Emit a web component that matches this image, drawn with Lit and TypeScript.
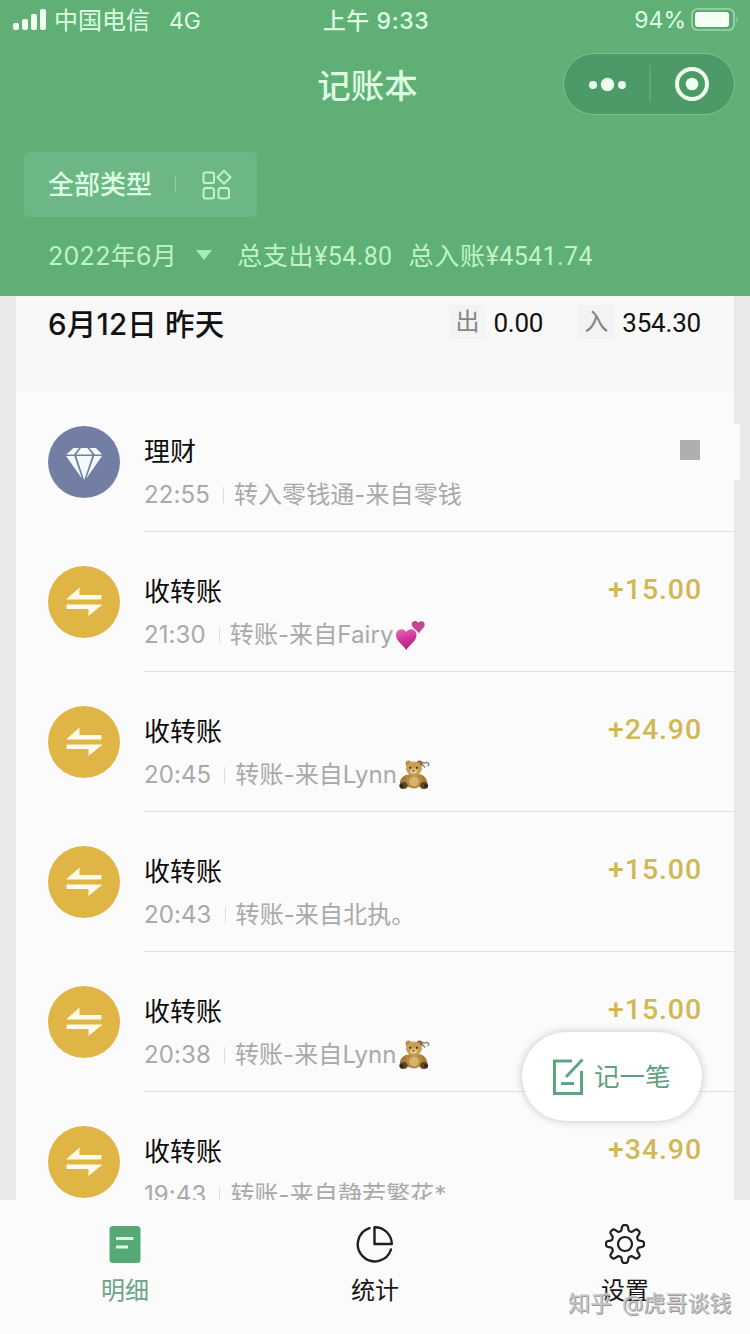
import { LitElement, html, css, svg, nothing } from "lit";
import { customElement, property } from "lit/decorators.js";

interface Entry {
  kind: "invest" | "transfer";
  title: string;
  time: string;
  note: string;
  emoji?: "hearts" | "bear";
  amount?: string;
}

const ENTRIES: Entry[] = [
  { kind: "invest", title: "理财", time: "22:55", note: "转入零钱通-来自零钱" },
  { kind: "transfer", title: "收转账", time: "21:30", note: "转账-来自Fairy", emoji: "hearts", amount: "15.00" },
  { kind: "transfer", title: "收转账", time: "20:45", note: "转账-来自Lynn", emoji: "bear", amount: "24.90" },
  { kind: "transfer", title: "收转账", time: "20:43", note: "转账-来自北执。", amount: "15.00" },
  { kind: "transfer", title: "收转账", time: "20:38", note: "转账-来自Lynn", emoji: "bear", amount: "15.00" },
  { kind: "transfer", title: "收转账", time: "19:43", note: "转账-来自静若繁花*", amount: "34.90" },
];

const diamond = svg`
  <circle cx="36" cy="36" r="36" fill="#727ea3"></circle>
  <g fill="#f3fbfa">
    <path d="M25.500 22H31L26 28.500H18.300Z"></path>
    <path d="M33 22H39.500L44.500 28.500H28.200Z"></path>
    <path d="M41.500 22H48L54 28.500H46.800Z"></path>
    <path d="M18 30H26.300L34 52.500Z"></path>
    <path d="M28.300 30H44.200L36.200 54Z"></path>
    <path d="M46.200 30H54L38.300 52.500Z"></path>
  </g>`;

const arrows = svg`
  <circle cx="36" cy="36" r="36" fill="#dfb545"></circle>
  <path fill="#fffbea" d="M18 33.500L31.500 21.500V29H53.500V33.500ZM18.500 38.500H54.500L40.500 50V43H18.500Z"></path>`;

const hearts = html`<svg class="emoji" viewBox="0 0 32 32">
  <defs>
    <linearGradient id="hg" x1="0" y1="0" x2="0.3" y2="1">
      <stop offset="0" stop-color="#e86db5"></stop><stop offset="0.55" stop-color="#d33599"></stop><stop offset="1" stop-color="#b3267f"></stop>
    </linearGradient>
  </defs>
  <path fill="url(#hg)" d="M11.200 31C8.500 26 1 22.500 1 16C1 9.500 9 8.500 11.200 13C13.500 8.500 21.500 9.500 21.500 16C21.500 22.500 14 26 11.200 31Z"></path>
  <path fill="#c0468f" d="M24 14.500C22 11 16.700 9 16.700 5.300C16.700 1.500 21.800 1 23.300 4C25 1 30 2 29.700 5.500C29.500 9 25.500 11 24 14.500Z"></path>
</svg>`;

const bear = html`<svg class="emoji" viewBox="0 0 32 32">
  <path d="M22 4.500C25 2 26 5 28 3.500C31 3 31.500 6 29.500 7M24 5L27 8.500" fill="none" stroke="#7c8070" stroke-width="1.300"></path>
  <circle cx="10.500" cy="4.500" r="3" fill="#b8924c"></circle><circle cx="21.500" cy="4.500" r="3" fill="#8a6b38"></circle>
  <path d="M8 16C3 18 1 22 2.500 26L9 28H23L29 26C30 21 27 17 23 15.500Z" fill="#a67d38"></path>
  <ellipse cx="16" cy="21.500" rx="8" ry="8" fill="#b68c43"></ellipse>
  <ellipse cx="16" cy="22.500" rx="5" ry="5" fill="#d5b36b"></ellipse>
  <ellipse cx="16" cy="9.500" rx="8" ry="7" fill="#c6a057"></ellipse>
  <ellipse cx="15.500" cy="12" rx="3.500" ry="2.600" fill="#e2c988"></ellipse>
  <circle cx="12.300" cy="8.800" r="1" fill="#33240f"></circle><circle cx="18.800" cy="8.800" r="1" fill="#33240f"></circle>
  <path d="M14.200 11H16.800L15.500 12.600Z" fill="#33240f"></path>
  <ellipse cx="5.500" cy="26.500" rx="4" ry="3.500" fill="#5c4726"></ellipse><ellipse cx="26" cy="26.500" rx="4" ry="3.500" fill="#5c4726"></ellipse>
  <circle cx="3.500" cy="27" r="2" fill="#302516"></circle><circle cx="28" cy="27" r="2" fill="#302516"></circle>
</svg>`;

/** Outline of an eight-lobed cog centred on (20, 20). */
function cogPath(): string {
  const points: string[] = [];
  const steps = 160;
  for (let i = 0; i < steps; i++) {
    const a = (i / steps) * Math.PI * 2;
    const wave = Math.cos(8 * a);
    const r = 16.3 + 2.7 * Math.tanh(2.0 * wave) / Math.tanh(2.0);
    points.push(`${(20 + r * Math.sin(a)).toFixed(2)} ${(20 - r * Math.cos(a)).toFixed(2)}`);
  }
  return `M${points.join("L")}Z`;
}

@customElement("ledger-row")
export class LedgerRow extends LitElement {
  @property({ attribute: false }) entry!: Entry;

  static styles = css`
    :host { display: flex; height: 140px; box-sizing: border-box; padding-left: 32px; }
    svg { display: block; flex: none; }
    .badge { width: 72px; height: 72px; margin: 34px 24px 0 0; }
    .body { flex: 1; display: flex; justify-content: space-between; box-sizing: border-box; padding-right: 32px; border-bottom: 1px solid #e0e0e0; }
    .text { display: flex; flex-direction: column; padding-top: 40px; white-space: nowrap; }
    .title { font-size: 26px; line-height: 40px; color: #0c0c0c; }
    .meta { display: flex; align-items: center; height: 36px; margin-top: 5px; font-size: 24px; line-height: 36px; color: #a9a9a9; }
    .time { letter-spacing: 0.1px; }
    .bar { width: 1px; height: 16px; margin: 0 10px 0 13px; background: #dcdcdc; }
    .note { letter-spacing: 0.1px; }
    .emoji { width: 32px; height: 32px; margin-left: 1px; }
    .amount { padding-top: 38px; font: 500 28.500px/40px Roboto, sans-serif; letter-spacing: 0.9px; color: #d0b855; }
    .block { width: 20px; height: 20px; margin: 48px 2px 0 0; background: #aeaeae; }
  `;

  render() {
    const e = this.entry;
    return html`
      <svg class="badge" viewBox="0 0 72 72">${e.kind === "invest" ? diamond : arrows}</svg>
      <div class="body">
        <div class="text">
          <div class="title">${e.title}</div>
          <div class="meta">
            <span class="time">${e.time}</span><span class="bar"></span><span class="note">${e.note}</span>
            ${e.emoji === "hearts" ? hearts : e.emoji === "bear" ? bear : nothing}
          </div>
        </div>
        ${e.amount ? html`<div class="amount">+${e.amount}</div>` : html`<div class="block"></div>`}
      </div>`;
  }
}

@customElement("app-root")
export class AppRoot extends LitElement {
  static styles = css`
    :host {
      display: flex; flex-direction: column; position: relative; width: 750px; height: 1334px; overflow: hidden;
      background: #fbfbfb; font-family: Inter, "Noto Sans CJK SC", sans-serif; white-space: nowrap;
    }
    svg { display: block; flex: none; }
    .head { height: 296px; flex: none; background: #60af77; color: #dcffe2; display: flex; flex-direction: column; }
    .status { display: grid; grid-template-columns: 1fr auto 1fr; height: 40px; align-items: center; padding: 0 11px 0 13px; font-size: 23px; }
    .carrier { display: flex; align-items: center; }
    .carrier .name { font-size: 24px; margin: -3px 0 0 8px; }
    .carrier .net { margin: 1px 0 0 19px; }
    .clock { font-size: 23px; font-weight: 500; letter-spacing: 0.6px; margin-top: -2px; }
    .power { display: flex; align-items: center; justify-content: flex-end; gap: 5px; }
    .nav { display: grid; grid-template-columns: 1fr auto 1fr; align-items: center; height: 88px; padding: 0 15px 0 0; }
    .nav h1 { grid-column: 2; margin: 3px 0 0; font-size: 33.500px; font-weight: 500; line-height: 50px; }
    .capsule { justify-self: end; display: flex; width: 172px; height: 62px; box-sizing: border-box; border: 1px solid #7fc28f; border-radius: 31px; background: #4c9a67; }
    .chip { display: flex; align-items: center; width: 233px; height: 65px; margin: 24px 0 0 24px; box-sizing: border-box; padding-left: 24px; background: #6db686; border-radius: 5px; font-size: 26px; font-weight: 500; }
    .chip .label { margin-top: -5px; }
    .chip .sep { width: 1px; height: 17px; background: #8fcfa0; margin: 0 25px 0 23px; }
    .sums { display: flex; align-items: center; height: 73px; padding-left: 48px; font-size: 25px; color: #bff5c4; }
    .month { letter-spacing: 0.3px; }
    .tri { width: 16px; height: 10px; margin: 3px 25px 0 19px; }
    .total-label { letter-spacing: 0.7px; }
    .num { font-family: Roboto, sans-serif; letter-spacing: 0.4px; }
    .sum { margin-right: 16px; }
    .list { flex: 1; min-height: 0; overflow: hidden; padding: 0 16px; background: #e9e9e9; }
    .card { background: #fbfbfb; }
    .day { display: flex; height: 96px; box-sizing: border-box; padding: 5px 33px 0 32px; background: linear-gradient(#f8f8f8 92px, #fafafa 94px); color: #111; line-height: 44px; }
    .date { flex: 1; font-size: 29.500px; font-weight: 500; line-height: 46px; letter-spacing: 0.2px; }
    .tag { display: flex; align-items: center; justify-content: center; width: 36px; height: 34px; margin: 4px 8px 0 0; background: #f4f3f4; color: #858585; font-size: 24px; }
    .total { font: 400 26px/44px Roboto, sans-serif; letter-spacing: -0.2px; }
    .total + .tag { margin-left: 35px; }
    .patch { position: absolute; left: 733px; top: 424px; width: 7px; height: 56px; background: #fcfcfc; }
    .add { position: absolute; left: 522px; top: 1032px; width: 180px; height: 89px; box-sizing: border-box; display: flex; align-items: center; padding-left: 30px; gap: 10px; border-radius: 45px; background: #fff; box-shadow: 0 0 9px rgba(0, 0, 0, 0.22); color: #5f9f7e; font-size: 25.500px; }
    .add span { margin-top: -5px; }
    .tabs { display: grid; grid-template-columns: repeat(3, 1fr); height: 134px; flex: none; background: #fbfbfb; color: #161616; }
    .tab { display: flex; flex-direction: column; align-items: center; padding-top: 24px; font-size: 24px; }
    .tab span { line-height: 36px; margin-top: 9px; }
    .tab.on { color: #6ba486; }
    .mark { position: absolute; left: 568px; top: 1285px; display: flex; gap: 10px; font-size: 22px; line-height: 36px; color: #c4c4c4; text-shadow: 1px 1px 0 #999; }
  `;

  render() {
    return html`
      <header class="head">
        <div class="status">
          <div class="carrier">
            <svg width="33" height="22" viewBox="0 0 33 22" fill="#effff0">
              <rect x="0" y="14" width="6" height="7" rx="2"></rect><rect x="9" y="10" width="6" height="11" rx="2"></rect>
              <rect x="18" y="5" width="6" height="16" rx="2"></rect><rect x="27" y="0" width="6" height="21" rx="2"></rect>
            </svg>
            <span class="name">中国电信</span><span class="net">4G</span>
          </div>
          <div class="clock">上午 9:33</div>
          <div class="power">
            <span>94%</span>
            <svg width="48" height="24" viewBox="0 0 48 24">
              <rect x="1" y="1" width="42" height="21" rx="5.500" fill="#5fa474" stroke="#9bdcaa" stroke-width="1.600"></rect>
              <rect x="4" y="4" width="34" height="15" rx="3" fill="#f4fff4"></rect>
              <path d="M45.500 8.500Q48 11.500 45.500 14.500Z" fill="#9bdcaa"></path>
            </svg>
          </div>
        </div>
        <div class="nav">
          <h1>记账本</h1>
          <div class="capsule">
            <svg width="170" height="60" viewBox="0 0 170 60" fill="#edffed">
              <circle cx="29" cy="31" r="4"></circle><circle cx="43.500" cy="30.500" r="6.700"></circle><circle cx="58" cy="31" r="4"></circle>
              <path d="M86 11V47" stroke="#74b487" stroke-width="1"></path>
              <circle cx="128" cy="30" r="15" fill="none" stroke="#edffed" stroke-width="4"></circle><circle cx="128" cy="30" r="6.300"></circle>
            </svg>
          </div>
        </div>
        <div class="chip">
          <span class="label">全部类型</span><span class="sep"></span>
          <svg width="32" height="32" viewBox="0 0 32 32" fill="none" stroke="#c3f4c7" stroke-width="2">
            <rect x="2.500" y="3.500" width="10.500" height="10.500" rx="1.500"></rect><path d="M23 1.600L29.500 8.200L23 14.800L16.500 8.200Z" stroke-linejoin="round"></path>
            <rect x="2.500" y="19" width="10.500" height="10.500" rx="2.500"></rect><rect x="17.500" y="19" width="10.500" height="10.500" rx="2.500"></rect>
          </svg>
        </div>
        <div class="sums">
          <span class="month">2022年6月</span>
          <svg class="tri" viewBox="0 0 16 10"><path d="M0 0H16L8 10Z" fill="#a6edb2"></path></svg>
          <span class="sum"><span class="total-label">总支出</span><span class="num">¥54.80</span></span>
          <span class="sum"><span class="total-label">总入账</span><span class="num">¥4541.74</span></span>
        </div>
      </header>
      <main class="list">
        <div class="card">
          <div class="day">
            <span class="date">6月12日 昨天</span>
            <span class="tag">出</span><span class="total">0.00</span>
            <span class="tag">入</span><span class="total">354.30</span>
          </div>
          ${ENTRIES.map((e) => html`<ledger-row .entry=${e}></ledger-row>`)}
        </div>
      </main>
      <div class="patch"></div>
      <div class="add">
        <svg width="32" height="38" viewBox="0 0 32 38" fill="none" stroke="#5fa57f" stroke-width="3">
          <path d="M20 3H2.500V35.500H29.500V13"></path><path d="M14 19L30.500 1.500"></path><path d="M9 25.500H22"></path>
        </svg>
        <span>记一笔</span>
      </div>
      <nav class="tabs">
        <div class="tab on">
          <svg width="40" height="40" viewBox="0 0 40 40"><rect x="4.500" y="2" width="31" height="37" rx="3.500" fill="#56a974"></rect><path d="M11 14.500H28.500M11 23H23" stroke="#dcfbe2" stroke-width="2.800"></path></svg>
          <span>明细</span>
        </div>
        <div class="tab">
          <svg width="40" height="40" viewBox="0 0 40 40" fill="none" stroke="#1e1e1e" stroke-width="2.400">
            <path d="M14.500 4.200A17 17 0 1 0 36 25.500" stroke-linecap="round"></path><path d="M19.500 3.200V20H36.800A17 17 0 0 0 19.500 3.200Z" stroke-linejoin="round"></path>
          </svg>
          <span>统计</span>
        </div>
        <div class="tab">
          <svg width="40" height="40" viewBox="0 0 40 40" fill="none" stroke="#1e1e1e" stroke-width="2.200">
            <path d=${cogPath()} stroke-linejoin="round"></path><circle cx="20" cy="20" r="7"></circle>
          </svg>
          <span>设置</span>
        </div>
      </nav>
      <div class="mark"><span>知乎</span><span>@虎哥谈钱</span></div>
    `;
  }
}
